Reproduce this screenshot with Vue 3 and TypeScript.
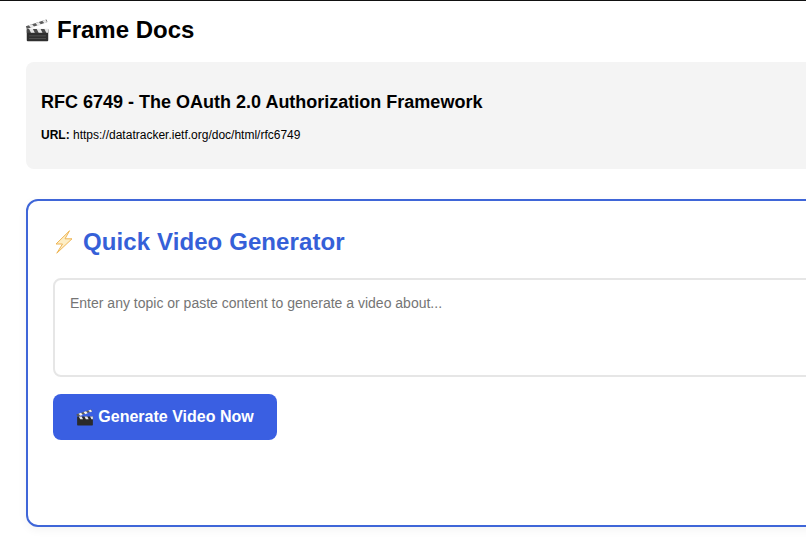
<script setup lang="ts">
import { ref } from 'vue';

const topic = ref('');
const rfcTitle = 'RFC 6749 - The OAuth 2.0 Authorization Framework';
const rfcUrl = 'https://datatracker.ietf.org/doc/html/rfc6749';
</script>

<template>
    <div class="page">
        <h1 class="brand">
            <svg class="clapper brand-icon" viewBox="0 0 32 30" aria-hidden="true">
                <path d="M2 13 L29 4 L27.6 0.6 L0.8 9.4 Z" fill="#5b5b5b" />
                <path d="M4.5 8.2 L9 6.7 L12 10.4 L7.6 11.8 Z M13.4 5.3 L17.8 3.8 L20.8 7.5 L16.4 9 Z M22 2.4 L26.4 1 L28.6 4.3 L25 5.6 Z" fill="#e8e8e8" />
                <rect x="2" y="13" width="28" height="16" rx="1.2" fill="#2f2f2f" />
                <rect x="2" y="13" width="28" height="5" fill="#4a4a4a" />
                <path d="M5 13 H10 L12.5 18 H7.5 Z M15 13 H20 L22.5 18 H17.5 Z M25 13 H30 V18 H27.5 Z" fill="#e6e6e6" />
                <path d="M5 22 H27 M5 25.500 H27" stroke="#5a5a5a" stroke-width="1" />
            </svg>
            <span>Frame Docs</span>
        </h1>

        <section class="doc-info">
            <h2>{{ rfcTitle }}</h2>
            <p><strong>URL:</strong> {{ rfcUrl }}</p>
        </section>

        <section class="generator">
            <h2 class="generator-title">
                <svg class="bolt" viewBox="0 0 20 24" aria-hidden="true">
                    <path d="M15.500 0.800 L2 14 H8.500 L2.800 23.200 L18 8.800 H11 Z" fill="#fdeec6" stroke="#eeb555" stroke-width="1" stroke-linejoin="round" />
                </svg>
                <span>Quick Video Generator</span>
            </h2>
            <textarea v-model="topic" class="topic" placeholder="Enter any topic or paste content to generate a video about..."></textarea>
            <button type="button" class="generate">
                <svg class="clapper btn-icon" viewBox="0 0 32 30" aria-hidden="true">
                    <path d="M2 13 L29 4 L27.6 0.6 L0.8 9.4 Z" fill="#5b5b5b" />
                    <path d="M4.5 8.2 L9 6.7 L12 10.4 L7.6 11.8 Z M13.4 5.3 L17.8 3.8 L20.8 7.5 L16.4 9 Z M22 2.4 L26.4 1 L28.6 4.3 L25 5.6 Z" fill="#f2f2f2" />
                    <rect x="2" y="13" width="28" height="16" rx="1.2" fill="#2a2a2a" />
                    <path d="M5 13 H10 L12.5 18 H7.5 Z M15 13 H20 L22.5 18 H17.5 Z M25 13 H30 V18 H27.5 Z" fill="#e6e6e6" />
                </svg>
                <span>Generate Video Now</span>
            </button>
        </section>
    </div>
</template>

<style>
html,
body {
    margin: 0;
    background: #fff;
    overflow: hidden;
}
</style>

<style scoped>
.page {
    box-sizing: border-box;
    width: 1100px;
    height: 538px;
    border-top: 1px solid #111;
    padding: 14px 0 0 26px;
    font-family: "Liberation Sans", Arial, sans-serif;
    color: #000;
}

.brand {
    display: flex;
    align-items: center;
    gap: 7px;
    height: 30px;
    margin: 0 0 17px -1px;
    font-size: 24px;
    font-weight: 700;
}

.brand-icon {
    width: 25px;
    height: 23px;
}

.doc-info {
    box-sizing: border-box;
    height: 107px;
    padding: 30px 15px 0;
    margin-bottom: 30px;
    background: #f4f4f4;
    border-radius: 8px;
}

.doc-info h2 {
    margin: 0 0 15px;
    font-size: 18px;
    line-height: 21px;
}

.doc-info p {
    margin: 0;
    font-size: 12px;
    line-height: 15px;
}

.generator {
    box-sizing: border-box;
    height: 328px;
    padding: 25px;
    border: 2px solid #3f66d8;
    border-radius: 12px;
    box-shadow: 0 3px 10px rgba(0, 0, 0, 0.05);
}

.generator-title {
    display: flex;
    align-items: center;
    gap: 8px;
    height: 32px;
    margin: 0 0 20px;
    font-size: 24px;
    letter-spacing: 0.1px;
    font-weight: 700;
    color: #3560d8;
}

.bolt {
    width: 22px;
    height: 24px;
}

.topic {
    display: block;
    box-sizing: border-box;
    width: 100%;
    height: 99px;
    padding: 15px;
    margin-bottom: 17px;
    border: 2px solid #e6e6e6;
    border-radius: 8px;
    font-family: inherit;
    font-size: 14px;
    resize: none;
    outline: none;
}

.topic::placeholder {
    color: #757575;
}

.generate {
    display: flex;
    align-items: center;
    justify-content: center;
    gap: 4px;
    width: 224px;
    height: 46px;
    padding: 0;
    border: 0;
    border-radius: 8px;
    background: #3a5fe2;
    color: #fff;
    font-family: inherit;
    font-size: 16px;
    font-weight: 700;
}

.btn-icon {
    width: 18px;
    height: 17px;
}
</style>
